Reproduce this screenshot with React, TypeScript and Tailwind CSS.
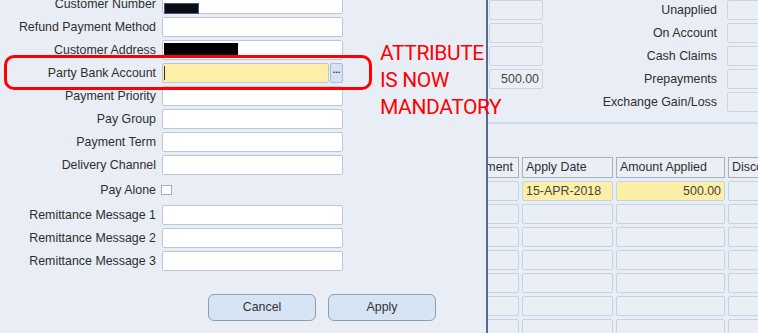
import React from "react";

const Field = ({ children, className = "" }: { children?: React.ReactNode; className?: string }) => (
  <div className={`relative h-[20px] w-[181px] shrink-0 rounded-[2px] border border-[#bcc7d8] bg-white ${className}`}>{children}</div>
);

const Row = ({ label, children }: { label: string; children: React.ReactNode }) => (
  <div className="flex h-[20px] items-center">
    <div className="w-[156px] shrink-0 whitespace-nowrap text-right">{label}</div>
    <div className="ml-[6px] flex">{children}</div>
  </div>
);

const TopBox = ({ children, className = "" }: { children?: React.ReactNode; className?: string }) => (
  <div className={`flex h-[20px] shrink-0 items-center justify-end rounded-[2px] border border-[#cbd4e1] bg-[#eaeff6] pr-[3px] text-[#444] ${className}`}>{children}</div>
);

const HeadCell = ({ w, children }: { w: string; children?: React.ReactNode }) => (
  <div className={`flex h-[21px] shrink-0 items-center overflow-hidden whitespace-nowrap border border-[#a9b0bb] bg-[#eaeff6] pl-[3px] ${w}`}>{children}</div>
);

const Cell = ({ w, yellow, right, children }: { w: string; yellow?: boolean; right?: boolean; children?: React.ReactNode }) => (
  <div
    className={`flex h-[20px] shrink-0 items-center overflow-hidden whitespace-nowrap rounded-[2px] border border-[#c6d3e5] px-[3px] text-[#444] ${
      yellow ? "bg-[#fdeea8]" : "bg-[#eaeff6]"
    } ${right ? "justify-end" : ""} ${w}`}
  >
    {children}
  </div>
);

export default function App() {
  const rows = [0, 1, 2, 3, 4, 5, 6];
  return (
    <div className="relative flex h-[333px] w-[758px] overflow-hidden bg-[#e9eef6] font-['Liberation_Sans',Arial,sans-serif] text-[12.4px] text-[#2e2e2e]">
      {/* Left dialog */}
      <div className="-mt-[6px] flex w-[486px] shrink-0 flex-col gap-[3px]">
        <Row label="Customer Number">
          <Field className="bg-[#fdeea8]">
            <div className="absolute left-[1px] top-[8px] h-[11px] w-[35px] border border-[#3a5a8a] bg-[#0b0b14]" />
          </Field>
        </Row>
        <Row label="Refund Payment Method">
          <Field />
        </Row>
        <Row label="Customer Address">
          <Field>
            <div className="absolute left-[1px] top-[2px] h-[12px] w-[74px] bg-black" />
          </Field>
        </Row>
        <Row label="Party Bank Account">
          <div className="relative h-[20px] w-[167px] rounded-[2px] border border-[#bcc7d8] bg-[#fdeea8]">
            <div className="absolute left-[1px] top-[2px] h-[14px] w-[1px] bg-[#333]" />
          </div>
          <div className="ml-[1px] flex h-[20px] w-[13px] items-start justify-center rounded-[2px] border border-[#aebdd1] bg-[#d6e3f3] text-[9px] font-bold leading-[12px] text-[#222]">
            ...
          </div>
        </Row>
        <Row label="Payment Priority">
          <Field />
        </Row>
        <Row label="Pay Group">
          <Field />
        </Row>
        <Row label="Payment Term">
          <Field />
        </Row>
        <Row label="Delivery Channel">
          <Field />
        </Row>
        <div className="flex h-[24px] items-center">
          <div className="w-[156px] shrink-0 text-right">Pay Alone</div>
          <div className="ml-[5px] h-[10px] w-[11px] border border-[#a7b0bd] bg-white" />
        </div>
        <Row label="Remittance Message 1">
          <Field />
        </Row>
        <Row label="Remittance Message 2">
          <Field />
        </Row>
        <Row label="Remittance Message 3">
          <Field />
        </Row>
        <div className="mt-[20px] flex gap-[12px] pl-[208px]">
          <button className="flex h-[27px] w-[108px] items-center justify-center rounded-[6px] border border-[#8e9cb0] bg-[#d6e4f4] text-[12.4px] text-[#333]">
            Cancel
          </button>
          <button className="flex h-[27px] w-[108px] items-center justify-center rounded-[6px] border border-[#8e9cb0] bg-[#d6e4f4] text-[12.4px] text-[#333]">
            Apply
          </button>
        </div>
      </div>

      {/* Right underlying form */}
      <div className="flex flex-1 flex-col overflow-hidden border-l-2 border-[#586b8c]">
        <div className="flex flex-col gap-[3px]">
          {["Unapplied", "On Account", "Cash Claims", "Prepayments", "Exchange Gain/Loss"].map((l, i) => (
            <div key={l} className="flex h-[20px] items-center">
              {i < 4 ? (
                <TopBox className="ml-[1px] w-[54px]">{i === 3 ? "500.00" : ""}</TopBox>
              ) : (
                <div className="ml-[1px] w-[54px] shrink-0" />
              )}
              <div className="w-[174px] shrink-0 whitespace-nowrap pt-[1px] text-right">{l}</div>
              <TopBox className="ml-[10px] w-[60px]" />
            </div>
          ))}
        </div>
        <div className="mt-[10px] h-[2px] w-full shrink-0 bg-[#d0dbea]" />
        <div className="-ml-[39px] mt-[33px] flex flex-col gap-[3px]">
          <div className="flex gap-[3px]">
            <HeadCell w="w-[70px]">Installment</HeadCell>
            <HeadCell w="w-[91px]">Apply Date</HeadCell>
            <HeadCell w="w-[109px]">Amount Applied</HeadCell>
            <HeadCell w="w-[80px]">Discount</HeadCell>
          </div>
          <div className="flex flex-col gap-[3px]">
            {rows.map((r) => (
              <div key={r} className="flex gap-[3px]">
                <Cell w="w-[70px]" />
                <Cell w="w-[91px]" yellow={r === 0}>
                  {r === 0 ? "15-APR-2018" : ""}
                </Cell>
                <Cell w="w-[109px]" yellow={r === 0} right>
                  {r === 0 ? "500.00" : ""}
                </Cell>
                <Cell w="w-[80px]" />
              </div>
            ))}
          </div>
        </div>
      </div>

      {/* Annotation overlay */}
      <div className="pointer-events-none absolute left-[4px] top-[55px] h-[35px] w-[368px] rounded-[10px] border-[3px] border-[#ff0000]" />
      <div className="pointer-events-none absolute left-[380px] top-[40px] font-['Roboto',sans-serif] text-[21px] leading-[27px] tracking-[-0.4px] text-[#ff0000]">
        ATTRIBUTE
        <br />
        IS NOW
        <br />
        MANDATORY
      </div>
    </div>
  );
}
